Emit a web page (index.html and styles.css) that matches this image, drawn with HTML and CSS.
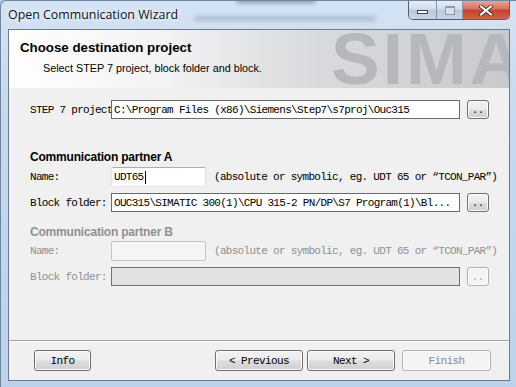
FILE: index.html
```html
<!DOCTYPE html>
<html lang="en">
<head>
  <meta charset="UTF-8" />
  <title>Open Communication Wizard</title>
  <link rel="stylesheet" href="styles.css">
</head>
<body>
  <div class="window">
    <div class="titlebar">
      <div class="glass-smudge smudge-top"></div>
      <div class="glass-smudge smudge-line"></div>
      <span class="title">Open Communication Wizard</span>
      <div class="caption-btns">
        <div class="cap cap-min"><span class="min-glyph"></span></div>
        <div class="cap cap-max"><span class="max-glyph"></span></div>
        <div class="cap cap-close">
          <svg width="14" height="11" viewBox="0 0 14 11">
            <path d="M2 1.5 L12 9.5 M12 1.5 L2 9.5" stroke="#3b3b3b" stroke-width="4" stroke-linecap="square"/>
            <path d="M2 1.5 L12 9.5 M12 1.5 L2 9.5" stroke="#ffffff" stroke-width="2" stroke-linecap="square"/>
          </svg>
        </div>
      </div>
    </div>

    <div class="client">
      <div class="header">
        <div class="header-text">
          <div class="header-title">Choose destination project</div>
          <div class="header-sub">Select STEP 7 project, block folder and block.</div>
        </div>
        <div class="watermark">SIMA</div>
      </div>

      <div class="body">
        <div class="row row-project">
          <span class="lbl">STEP 7 project</span>
          <div class="field field-wide">C:\Program Files (x86)\Siemens\Step7\s7proj\Ouc315</div>
          <button class="browse">..</button>
        </div>

        <div class="section-title title-a">Communication partner A</div>
        <div class="row row-name">
          <span class="lbl">Name:</span>
          <div class="field field-name">UDT65<span class="caret"></span></div>
          <span class="hint">(absolute or symbolic, eg. UDT 65 or “TCON_PAR”)</span>
        </div>
        <div class="row row-block">
          <span class="lbl">Block folder:</span>
          <div class="field field-wide">OUC315\SIMATIC 300(1)\CPU 315-2 PN/DP\S7 Program(1)\Bl...</div>
          <button class="browse">..</button>
        </div>

        <div class="section-title title-b disabled">Communication partner B</div>
        <div class="row row-name disabled">
          <span class="lbl">Name:</span>
          <div class="field field-name field-off"></div>
          <span class="hint">(absolute or symbolic, eg. UDT 65 or “TCON_PAR”)</span>
        </div>
        <div class="row row-block disabled">
          <span class="lbl">Block folder:</span>
          <div class="field field-wide field-grey"></div>
          <button class="browse browse-off">..</button>
        </div>
      </div>

      <div class="footer">
        <button class="btn btn-info">Info</button>
        <button class="btn btn-prev">&lt; Previous</button>
        <button class="btn btn-next">Next &gt;</button>
        <button class="btn btn-finish">Finish</button>
      </div>
    </div>
  </div>
</body>
</html>
```

FILE: styles.css
```css
body {
  margin: 0;
  padding: 0;
  background: #b9cfe7;
  font-family: 'Liberation Sans', Arial, sans-serif;
}

.window {
  width: 516px;
  height: 387px;
  box-sizing: border-box;
  border-left: 1px solid #6f86a0;
  border-top: 1px solid #6f86a0;
  border-top-left-radius: 6px;
  padding: 0 6px 6px 7px;
  background: linear-gradient(to bottom, #d4e3f3 0%, #c6d9ee 30%, #bcd2ea 100%);
  display: flex;
  flex-direction: column;
  overflow: hidden;
}

/* title bar */
.titlebar {
  position: relative;
  height: 28px;
  display: flex;
  align-items: flex-start;
  flex: none;
}

.title {
  position: relative;
  margin-top: 5px;
  font-family: 'Open Sans', sans-serif;
  font-size: 12.4px;
  color: #111;
  text-shadow: 0 0 6px #eef5fc, 0 0 3px #eef5fc;
}

/* what shows through the glass */
.glass-smudge {
  position: absolute;
  border-radius: 3px;
  filter: blur(2px);
}

.smudge-top {
  left: 228px;
  top: -3px;
  width: 80px;
  height: 5px;
  background: rgba(45, 60, 85, 0.45);
}

.smudge-line {
  left: 186px;
  top: 15px;
  width: 182px;
  height: 5px;
  background: rgba(60, 80, 110, 0.25);
}

.caption-btns {
  margin-left: auto;
  display: flex;
  height: 18px;
  border: 1px solid #4d5d72;
  border-top: none;
  border-radius: 0 0 5px 5px;
  overflow: hidden;
  position: relative;
}

.cap {
  display: flex;
  justify-content: center;
  align-items: center;
}

.cap-min,
.cap-max {
  width: 27px;
  background: linear-gradient(to bottom, #e4ecf5 0%, #d2dfec 45%, #b9c9dc 50%, #c6d5e6 100%);
  border-right: 1px solid #8596ab;
}

.cap-max {
  width: 25px;
}

.cap-close {
  width: 46px;
  background: linear-gradient(to bottom, #e9a597 0%, #d6705d 45%, #c5412a 52%, #d0654a 100%);
}

.min-glyph {
  width: 9px;
  height: 2px;
  margin-top: 4px;
  background: #fff;
  border: 1px solid #3d4651;
}

.max-glyph {
  width: 8px;
  height: 6px;
  border: 1px solid #8c9aab;
  border-top-width: 2px;
  background: #d8e2ed;
}

/* client area */
.client {
  flex: 1;
  display: flex;
  flex-direction: column;
  background: #f0f0f0;
  border: 1px solid #6d7b8d;
}

.header {
  height: 58px;
  flex: none;
  display: flex;
  overflow: hidden;
  background: linear-gradient(to right, #ffffff 0%, #f3f3f4 30%, #d9dadd 62%, #c9cace 100%);
}

.header-text {
  flex: 0 0 322px;
  padding-left: 11px;
  box-sizing: border-box;
}

.header-title {
  margin-top: 10px;
  font-size: 13.3px;
  font-weight: bold;
  color: #000;
  line-height: 16px;
}

.header-sub {
  margin-top: 5px;
  padding-left: 23px;
  font-size: 10.8px;
  color: #000;
  line-height: 14px;
}

.watermark {
  flex: none;
  margin-top: -8px;
  font-size: 73px;
  font-weight: bold;
  line-height: 1;
  letter-spacing: 3px;
  color: #b6b8bd;
  white-space: nowrap;
}

.body {
  flex: 1;
  padding-left: 21px;
  font-family: 'Liberation Mono', monospace;
  font-size: 11px;
  letter-spacing: -0.7px;
}

.row {
  display: flex;
  align-items: center;
}

.lbl {
  width: 81px;
  flex: none;
  color: #000;
  white-space: nowrap;
}

.row-project {
  margin-top: 12px;
  height: 19px;
}

.row-name {
  margin-top: 2px;
  height: 20px;
}

.row-block {
  margin-top: 6px;
  height: 19px;
}

.disabled.row-name {
  margin-top: 1px;
}

.section-title {
  font-family: 'Liberation Sans', Arial, sans-serif;
  font-size: 12px;
  font-weight: bold;
  letter-spacing: -0.2px;
  line-height: 15px;
  color: #000;
}

.title-a {
  margin-top: 31px;
}

.title-b {
  margin-top: 13px;
}

.field {
  height: 100%;
  box-sizing: border-box;
  display: flex;
  align-items: center;
  padding-left: 2px;
  background: #fff;
  color: #000;
  white-space: nowrap;
  overflow: hidden;
}

.field-wide {
  width: 349px;
  border: 1px solid #6a6a6a;
}

.field-name {
  width: 95px;
  border: 1px solid;
  border-color: #abadb3 #dbdfe6 #e3e9ef #e2e3ea;
  border-radius: 2px;
}

.caret {
  width: 1px;
  height: 13px;
  margin-left: 1px;
  background: #000;
}

.field-off {
  background: #f5f5f5;
  border-color: #c2c4c8;
}

.field-grey {
  background: #e2e2e2;
  border-color: #6f6f6f;
}

.hint {
  margin-left: 8px;
  color: #000;
  white-space: nowrap;
}

.disabled .lbl,
.disabled .hint,
.section-title.disabled {
  color: #8f9092;
}

.browse {
  width: 22px;
  height: 19px;
  margin-left: 7px;
  padding: 0 0 3px;
  display: flex;
  justify-content: center;
  align-items: flex-end;
  border: 1px solid #707070;
  border-radius: 3px;
  background: linear-gradient(to bottom, #f2f2f2 0%, #ebebeb 48%, #dddddd 52%, #cfcfcf 100%);
  box-shadow: inset 0 0 0 1px #fbfbfb;
  font-family: 'Liberation Mono', monospace;
  font-size: 10px;
  line-height: 8px;
  letter-spacing: 0;
  color: #000;
}

.browse-off {
  border-color: #adb2b5;
  background: #f4f4f4;
  color: #9a9a9a;
}

/* bottom buttons */
.footer {
  height: 40px;
  flex: none;
  box-sizing: border-box;
  border-top: 1px solid #a0a0a0;
  box-shadow: inset 0 1px 0 #ffffff;
  padding: 9px 18px 0 25px;
  display: flex;
  align-items: flex-start;
}

.btn {
  height: 21px;
  padding: 0;
  border: 1px solid #707070;
  border-radius: 3px;
  background: linear-gradient(to bottom, #f2f2f2 0%, #ebebeb 48%, #dddddd 52%, #cfcfcf 100%);
  box-shadow: inset 0 0 0 1px #fbfbfb;
  font-family: 'Liberation Mono', monospace;
  font-size: 11px;
  letter-spacing: -0.6px;
  color: #000;
}

.btn-info {
  width: 57px;
}

.btn-prev {
  width: 88px;
  margin-left: auto;
}

.btn-next {
  width: 88px;
  margin-left: 4px;
}

.btn-finish {
  width: 89px;
  margin-left: 7px;
  border-color: #adb2b5;
  background: #f4f4f4;
  color: #8a8a8a;
}
```
